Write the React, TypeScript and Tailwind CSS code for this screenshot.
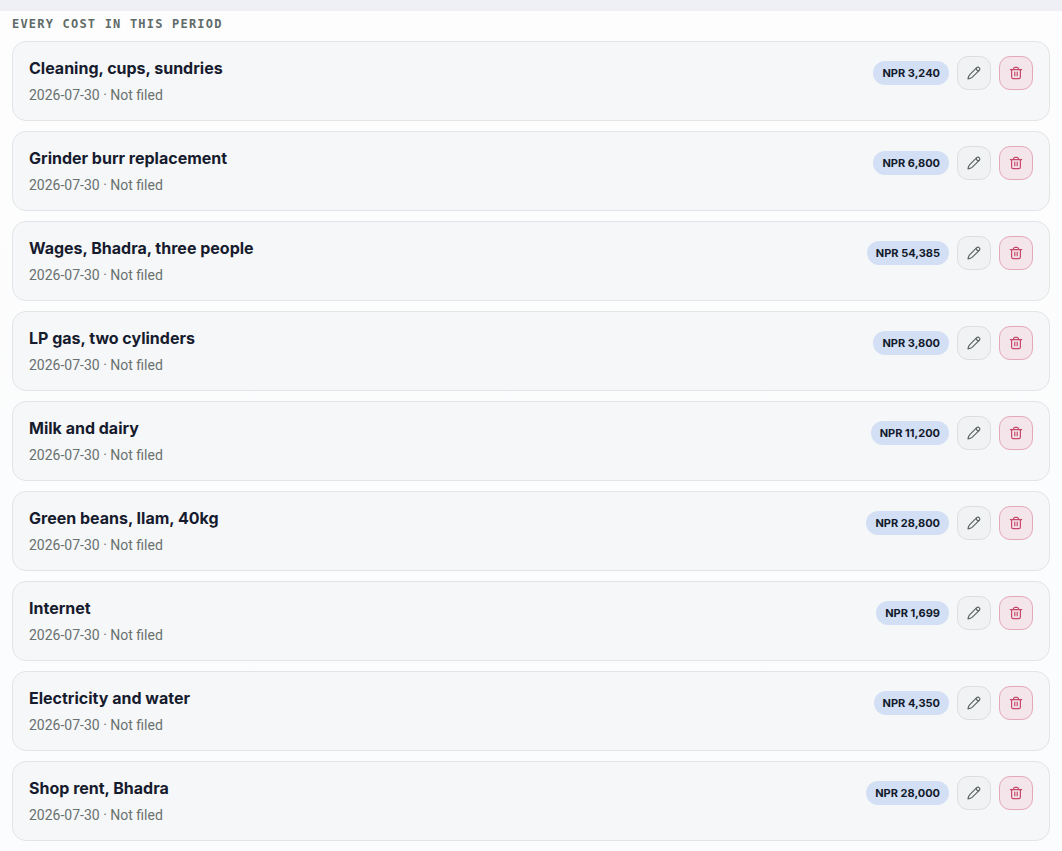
interface Cost {
  name: string;
  date: string;
  amount: number;
}

const costs: Cost[] = [
  { name: 'Cleaning, cups, sundries', date: '2026-07-30', amount: 3240 },
  { name: 'Grinder burr replacement', date: '2026-07-30', amount: 6800 },
  { name: 'Wages, Bhadra, three people', date: '2026-07-30', amount: 54385 },
  { name: 'LP gas, two cylinders', date: '2026-07-30', amount: 3800 },
  { name: 'Milk and dairy', date: '2026-07-30', amount: 11200 },
  { name: 'Green beans, Ilam, 40kg', date: '2026-07-30', amount: 28800 },
  { name: 'Internet', date: '2026-07-30', amount: 1699 },
  { name: 'Electricity and water', date: '2026-07-30', amount: 4350 },
  { name: 'Shop rent, Bhadra', date: '2026-07-30', amount: 28000 },
];

export default function App() {
  return (
    <main className="min-h-screen bg-linear-to-b from-[#fdfdfd] to-[#fbfcfe] pb-2 font-['Inter',sans-serif]">
      <div className="h-[11px] bg-[#eef0f6]" />
      <section className="px-3 pt-1">
        <h2 className="mb-2 font-['DejaVu_Sans_Mono',monospace] text-xs leading-[18px] font-bold tracking-widest text-[#5f6b68] uppercase">
          Every cost in this period
        </h2>
        <ul className="flex flex-col gap-[10px]">
          {costs.map((c) => (
            <CostRow key={c.name} cost={c} />
          ))}
        </ul>
      </section>
    </main>
  );
}

function CostRow({ cost }: { cost: Cost }) {
  return (
    <li className="flex items-start justify-between gap-4 rounded-[14px] border border-[#e2e5e8] bg-[#f6f7f9] px-4 py-[14px]">
      <div className="min-w-0">
        <h3 className="text-base leading-6 font-bold text-[#161b2e]">{cost.name}</h3>
        <p className="mt-1 font-['Roboto',sans-serif] text-sm leading-[22px] text-[#69716f]">
          {cost.date} · Not filed
        </p>
      </div>
      <div className="flex shrink-0 items-center gap-2">
        <span className="rounded-full bg-[#d3dff4] px-[9px] text-[11px] leading-6 font-bold text-[#121a2c]">
          NPR {cost.amount.toLocaleString('en-US')}
        </span>
        <button
          type="button"
          aria-label={`Edit ${cost.name}`}
          className="flex size-[34px] items-center justify-center rounded-[11px] border border-[#dcdfe1] bg-[#f0f2f3] text-[#5d6664]"
        >
          <PencilIcon />
        </button>
        <button
          type="button"
          aria-label={`Delete ${cost.name}`}
          className="flex size-[34px] items-center justify-center rounded-[11px] border border-[#e4a9b8] bg-[#f3e5ea] text-[#c5486a]"
        >
          <TrashIcon />
        </button>
      </div>
    </li>
  );
}

function PencilIcon() {
  return (
    <svg width="16" height="16" viewBox="0 0 16 16" fill="none" stroke="currentColor" strokeWidth="1.2" strokeLinecap="round" strokeLinejoin="round">
      <path d="M10.7 2.7 3.6 9.8C2.8 10.7 2.2 12.4 2 13.9c1.5-.2 3.2-.7 4.1-1.5l7.1-7.1c.8-.8.8-1.8.1-2.5s-1.8-.9-2.6-.1Z" />
      <path d="M10.3 3.2c-.1 1.5.9 2.5 2.5 2.5" />
    </svg>
  );
}

function TrashIcon() {
  return (
    <svg width="16" height="16" viewBox="0 0 16 16" fill="none" stroke="currentColor" strokeWidth="1.2" strokeLinecap="round" strokeLinejoin="round">
      <path d="M2.3 4.6h11.4" />
      <path d="M5.2 4.4c.3-1.4.8-2.1 1.7-2.1h2.2c.9 0 1.4.7 1.7 2.1" />
      <path d="M3.6 4.8v7.2c0 1 .6 1.6 1.6 1.6h5.6c1 0 1.6-.6 1.6-1.6V4.8" />
      <path d="M6.8 7.2v3.6M9.2 7.2v3.6" />
    </svg>
  );
}
